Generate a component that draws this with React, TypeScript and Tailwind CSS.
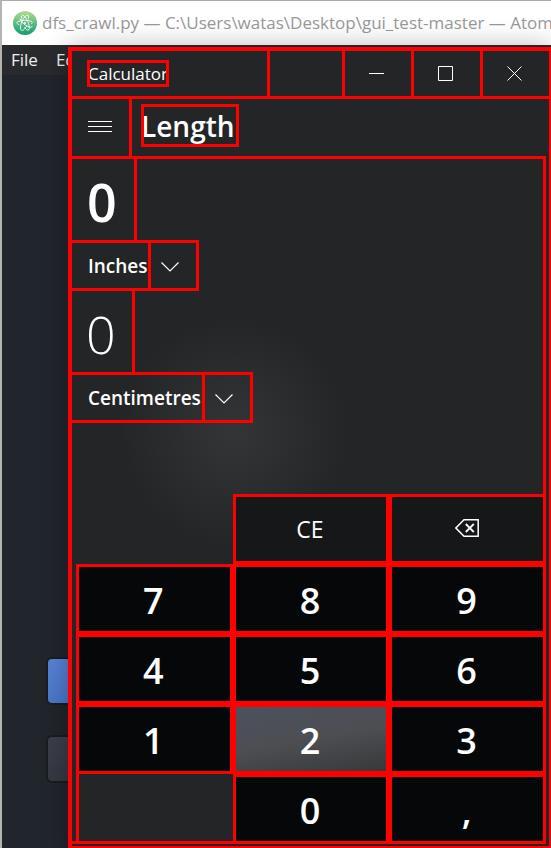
import type { ReactNode } from 'react';

function AtomLogo() {
  return (
    <svg className="size-6 shrink-0" viewBox="0 0 24 24" fill="none" aria-hidden="true">
      <defs>
        <linearGradient id="atom-disc" x1="0" y1="0" x2="0" y2="1">
          <stop offset="0" stopColor="#b4dd8e" />
          <stop offset="0.5" stopColor="#5dbb84" />
          <stop offset="1" stopColor="#109e72" />
        </linearGradient>
      </defs>
      <circle cx="12" cy="12" r="12" fill="url(#atom-disc)" />
      <g stroke="#fff" strokeWidth="0.9" strokeLinecap="round">
        <path d="M5.6 13.6C3.4 12.6 3.2 11 6 10.2c3.2-1 8-1.2 11.400-.2 2 .6 2.600 1.600 1.200 2.600" />
        <path d="M9.200 9.600C8 6.800 8.200 4.600 9.600 4.400c1.800-.2 4.600 4 6 8.200 1.200 3.600 1 6.400-.6 6.600-1 .1-2.200-1-3.400-2.800" />
        <path d="M15.400 7.400c.6-2 .2-3.400-1-3.200-2 .4-4.600 3.600-6 7.600-1.200 3.600-1.400 7 .2 7.600 1.400.5 3.600-1.600 5.200-4.400" />
        <path d="M7 8c1.600 3 4.200 5.600 7.200 7.200 2.600 1.300 4.800 1.500 5 .4" />
      </g>
      <circle cx="12" cy="12" r="1" fill="#fff" />
    </svg>
  );
}

function WindowButton({ label, children }: { label: string; children: ReactNode }) {
  return (
    <button type="button" aria-label={label} className="flex w-[69px] items-center border-l-3 border-[#f00] pl-6">
      <svg width="15" height="15" viewBox="0 0 15 15" fill="none" stroke="#fff" aria-hidden="true">
        {children}
      </svg>
    </button>
  );
}

function UnitSelect({ label, value, width }: { label: string; value: string; width: string }) {
  return (
    <div className={`relative h-[51px] border-y-3 border-r-3 border-[#f00] ${width}`}>
      <select
        aria-label={label}
        defaultValue={value}
        className="h-full w-full appearance-none bg-transparent pt-0.5 pl-4 text-[19px] font-semibold outline-none"
      >
        <option>Inches</option>
        <option>Centimetres</option>
      </select>
      <span className="pointer-events-none absolute inset-y-0 right-0 flex w-12 items-center border-l-3 border-[#f00] pt-0.5 pl-2.5">
        <svg width="18" height="10" viewBox="0 0 18 10" fill="none" stroke="#fff" strokeWidth="1.2" aria-hidden="true">
          <path d="M0.5 0.5 9 9 17.5 0.5" />
        </svg>
      </span>
    </div>
  );
}

const digitKey = 'border-3 border-[#f00] pt-1 pr-0.5 text-4xl font-semibold';
const editKey = 'flex items-center justify-center border-3 border-[#f00] bg-[#161719] pr-0.5';

function Digit({ children, active }: { children: string; active?: boolean }) {
  return (
    <button
      type="button"
      className={`${digitKey} ${active ? 'bg-linear-170 from-[#4c515d] via-[#4c4e52] to-[#37393b]' : 'bg-[#060708]'}`}
    >
      {children}
    </button>
  );
}

function Calculator() {
  return (
    <section
      aria-label="Calculator"
      className="absolute top-[47px] right-0 left-[68px] border-t-4 border-r-2 border-b-2 border-l-4 border-[#f00] bg-[#232527] bg-radial-[circle_at_34%_48%] from-[#343537] via-[#232527] via-22% to-[#232527] text-white shadow-[0_0_24px_rgba(0,0,0,0.3)]"
    >
      <header className="flex h-12 border-b-3 border-[#f00]">
        <div className="flex flex-1 items-center pl-[15px]">
          <h1 className="h-[27px] w-[82px] pl-px text-[17px] leading-[27px] outline-3 -outline-offset-3 outline-[#f00]">
            Calculator
          </h1>
        </div>
        <div className="w-[75px] border-l-3 border-[#f00]" />
        <WindowButton label="Minimize">
          <path d="M0 7.5h15" />
        </WindowButton>
        <WindowButton label="Maximize">
          <path d="M0.5 0.5h14v14h-14z" />
        </WindowButton>
        <WindowButton label="Close">
          <path d="M0.5 0.5l14 14M14.5 0.5l-14 14" />
        </WindowButton>
      </header>

      <div className="flex h-[57px]">
        <button type="button" aria-label="Open navigation" className="flex w-15 items-center border-r-3 border-[#f00] pb-0.5 pl-4">
          <svg width="24" height="11" viewBox="0 0 24 11" stroke="#fff" aria-hidden="true">
            <path d="M0 0.5h24M0 5.5h24M0 10.5h24" />
          </svg>
        </button>
        <h2 className="mt-[5px] ml-[9px] h-[43px] w-[98px] text-[28px] leading-[45px] font-semibold outline-3 -outline-offset-3 outline-[#f00]">
          Length
        </h2>
      </div>

      <main className="pr-[3px]">
        <div className="h-[338px] border-t-3 border-r-3 border-[#f00]">
          <output className="flex h-[81px] w-[65px] items-center border-r-3 border-[#f00] pt-1 pl-[15px] text-[52px] leading-none font-semibold">
            0
          </output>
          <UnitSelect label="From unit" value="Inches" width="w-[127px]" />
          <output className="flex h-[81px] w-[63px] items-center border-r-3 border-[#f00] pt-1 pl-[14px] text-[52px] leading-none font-light">
            0
          </output>
          <UnitSelect label="To unit" value="Centimetres" width="w-[181px]" />
        </div>

        <div className="flex">
          <div className="w-1 border-b-3 border-[#f00]" />
          <div className="grid flex-1 auto-rows-[70px] grid-cols-3">
            <div />
            <button type="button" className={`${editKey} text-[23px]`}>
              CE
            </button>
            <button type="button" aria-label="Backspace" className={`${editKey} pb-0.5`}>
              <svg width="24" height="18" viewBox="0 0 24 18" fill="none" stroke="#fff" strokeWidth="1.5" aria-hidden="true">
                <path d="M9 0.8h14.2v16.4H9L0.9 9z" />
                <path d="M10.8 5l8 8M18.8 5l-8 8" strokeWidth="1.8" />
              </svg>
            </button>
            <Digit>7</Digit>
            <Digit>8</Digit>
            <Digit>9</Digit>
            <Digit>4</Digit>
            <Digit>5</Digit>
            <Digit>6</Digit>
            <Digit>1</Digit>
            <Digit active>2</Digit>
            <Digit>3</Digit>
            <div className="border-b-3 border-l-3 border-[#f00]" />
            <Digit>0</Digit>
            <Digit>,</Digit>
          </div>
        </div>
        <div className="h-0.5" />
      </main>
    </section>
  );
}

export default function App() {
  return (
    <div className="relative flex min-h-screen flex-col overflow-hidden border-t border-l-2 border-t-[#a9a9a9] border-l-[#b4b4b2] bg-[#21252c] font-['Open_Sans','Noto_Sans',sans-serif]">
      <div className="flex h-11 items-center gap-[5px] bg-white pl-[11px] text-[17px] whitespace-nowrap text-[#999]">
        <AtomLogo />
        <span>dfs_crawl.py — C:\Users\watas\Desktop\gui_test-master — Atom</span>
      </div>
      <nav className="flex h-[30px] items-center gap-[18px] bg-[#292a2d] pl-[9px] text-[17px] text-[#f0f0f0]">
        <button type="button">File</button>
        <button type="button">Edit</button>
      </nav>
      <div className="flex flex-1 flex-col gap-[30px] pt-[582px] pl-11">
        <button type="button" aria-label="Primary action" className="h-12 w-40 rounded-md border-2 border-[#1a1c21] bg-linear-to-b from-[#5882d2] to-[#4977cb]" />
        <button type="button" aria-label="Secondary action" className="h-12 w-40 rounded-md border-2 border-[#1a1c21] bg-linear-to-b from-[#3c3f4a] to-[#353842]" />
      </div>
      <div className="absolute inset-0 overflow-hidden">
        <div className="relative -mt-px -ml-0.5 min-h-full">
          <Calculator />
        </div>
      </div>
      <span className="absolute -top-px -left-0.5 size-0.5 bg-[#f00]" />
    </div>
  );
}
